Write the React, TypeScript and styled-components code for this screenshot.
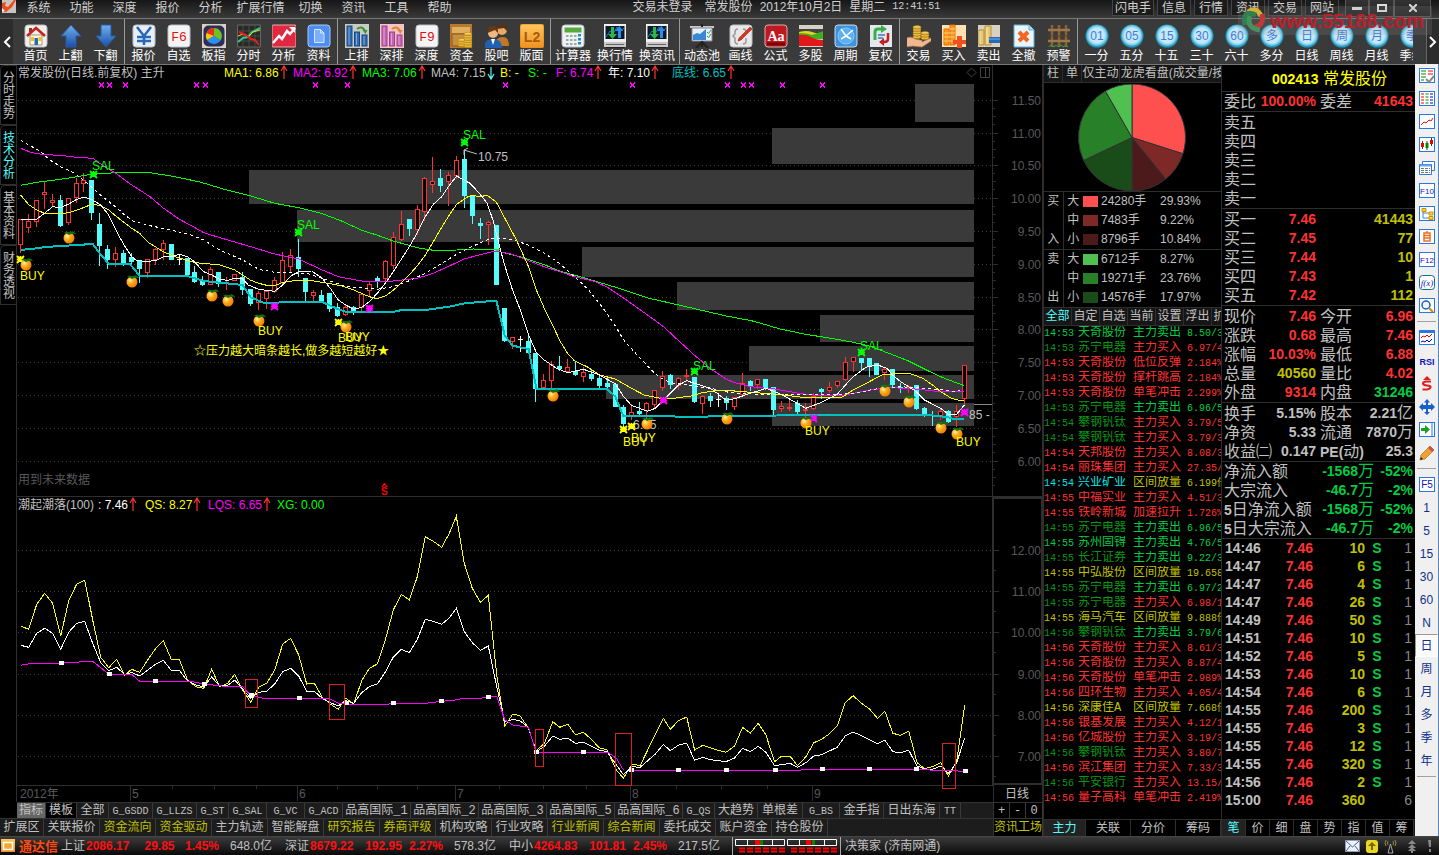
import React from "react";
import styled, { createGlobalStyle, css } from "styled-components";

const SANS = '"Liberation Sans", "Noto Sans CJK SC", sans-serif';
const MONO = '"Liberation Mono", "Noto Sans CJK SC", monospace';

const C = {
  line: "#2e2e2e",
  text: "#c0c0c0",
  dim: "#585858",
  red: "#ff3232",
  green: "#00cc44",
  darkGreen: "#0a9614",
  olive: "#c0c000",
  yellow: "#ffff00",
  cyan: "#00e6e6",
  candle: "#54fcfc",
  magenta: "#ff00ff",
  lime: "#00ff00",
  teal: "#00c0c0",
};

const GlobalStyle = createGlobalStyle`
  * { box-sizing: border-box; }
  body { margin: 0; background: #000; color: ${C.text}; font: 12px/16px ${SANS}; }
  button { font: inherit; color: inherit; background: none; border: 0; padding: 0; margin: 0; white-space: nowrap; cursor: pointer; }
  table { border-collapse: separate; border-spacing: 0; table-layout: fixed; width: 100%; }
  td, th { padding: 0; font-weight: inherit; text-align: left; white-space: nowrap; overflow: hidden; }
  svg { display: block; flex: none; }
`;

const Page = styled.div`
  position: relative;
  display: flex;
  flex-direction: column;
  min-height: 100vh;
  overflow: hidden;
`;

/* ---------- title bar ---------- */

const TitleBar = styled.header`
  display: flex;
  height: 18px;
  background: linear-gradient(#161616, #3a3a3a);
  color: #d0d0d0;
  padding-right: 8px;
`;
const Menu = styled.nav`
  display: flex;
`;
const MenuItem = styled.button<{ $wide?: boolean }>`
  width: ${(p) => (p.$wide ? 57 : 43)}px;
  line-height: 14px;
  height: 16px;
`;
const Session = styled.div`
  flex: 1;
  display: flex;
  justify-content: center;
  gap: 7px;
  line-height: 14px;
  white-space: nowrap;
  span:first-child { margin-right: 5px; }
  time:last-child { font-family: ${MONO}; font-size: 10px; }
`;
const Shortcuts = styled.div`
  display: flex;
  gap: 3px;
  margin-right: 6px;
`;
const Shortcut = styled.button`
  min-width: 34px;
  padding: 0 2px;
  height: 16px;
  line-height: 14px;
  background: #1c1c1c;
  border: 1px solid #444;
  border-top: 0;
`;
const WindowButton = styled.button<{ $w: number }>`
  width: ${(p) => p.$w}px;
  height: 17px;
  display: flex;
  align-items: center;
  justify-content: center;
  border: 1px solid #555;
  border-top: 0;
  background: linear-gradient(#333, #222);
`;
const Watermark = styled.div`
  position: absolute;
  top: 6px;
  right: 7px;
  display: flex;
  align-items: center;
  height: 29px;
  padding-right: 8px;
  background: rgba(150, 150, 150, 0.18);
  color: #b8202c;
  font-size: 20px;
  font-weight: bold;
  pointer-events: none;
`;

/* ---------- toolbar ---------- */

const ToolBar = styled.div`
  display: flex;
  height: 47px;
  background: #3a3a3a;
  border-top: 1px solid #777;
  border-bottom: 1px solid #777;
  color: #fff;
`;
const Scroller = styled.button<{ $right?: boolean }>`
  width: 13px;
  background: #2c2c2c;
  display: flex;
  align-items: center;
  justify-content: center;
  ${(p) => p.$right && css`border-left: 1px solid #666;`}
`;
const Tools = styled.div`
  flex: 1;
  display: flex;
  overflow: hidden;
  margin: 0 13px 0 5px;
`;
const ToolGroup = styled.div`
  display: flex;
  flex: none;
  & + & { border-left: 1px solid #999; padding-left: 1px; margin-left: 1px; }
`;
const Tool = styled.button<{ $w: number }>`
  width: ${(p) => p.$w}px;
  display: flex;
  flex-direction: column;
  align-items: center;
  justify-content: flex-end;
  line-height: 16px;
`;

/* ---------- workspace ---------- */

const Workspace = styled.main`
  flex: 1;
  display: flex;
`;
const ChartArea = styled.section`
  flex: 1;
  min-width: 0;
  display: flex;
  flex-direction: column;
`;
const ChartRow = styled.div`
  display: flex;
`;
const SideTabs = styled.nav`
  width: 17px;
  flex: none;
  border-right: 1px solid ${C.line};
`;
const SideTab = styled.button<{ $on?: boolean }>`
  display: block;
  width: 16px;
  height: 60px;
  padding: 6px 2px;
  line-height: 12px;
  white-space: normal;
  word-break: break-all;
  color: ${(p) => (p.$on ? C.candle : C.text)};
  border: 1px solid ${C.line};
  border-right: 0;
  border-top-left-radius: 5px;
`;
const Panes = styled.div`
  flex: 1;
  min-width: 0;
`;
const PaneHeader = styled.div<{ $boxed?: boolean }>`
  display: flex;
  height: ${(p) => (p.$boxed ? 17 : 16)}px;
  border-top: ${(p) => (p.$boxed ? `1px solid ${C.line}` : "0")};
  padding-left: 1px;
`;
const Legend = styled.div`
  flex: 1;
  display: flex;
  white-space: nowrap;
`;
const PaneTitle = styled.span<{ $w: number }>`
  width: ${(p) => p.$w}px;
`;
const LegendItem = styled.span<{ $w: number; $c: string }>`
  width: ${(p) => p.$w}px;
  color: ${(p) => p.$c};
  display: flex;
  gap: 1px;
`;
const AxisCap = styled.div<{ $boxed?: boolean }>`
  width: 51px;
  border-left: ${(p) => (p.$boxed ? 2 : 1)}px solid ${C.line};
  border-top: ${(p) => (p.$boxed ? 2 : 0)}px solid ${C.line};
  border-right: ${(p) => (p.$boxed ? 2 : 1)}px solid ${C.line};
`;
const Plot = styled.svg`
  width: 100%;
  height: auto;
  overflow: visible;
  font-family: ${SANS};
  font-size: 12px;
`;
const TabStrip = styled.div<{ $h: number; $indent?: boolean }>`
  display: flex;
  height: ${(p) => p.$h}px;
  line-height: ${(p) => p.$h - 3}px;
  background: #1c1c1c;
  border-top: 1px solid #333;
  margin-left: ${(p) => (p.$indent ? 17 : 0)}px;
  font-family: ${MONO};
`;
const Tab = styled.button<{ $w: number; $c?: string; $bg?: string }>`
  width: ${(p) => p.$w}px;
  flex: none;
  overflow: hidden;
  padding-top: 2px;
  border-right: 1px solid #3a3a3a;
  color: ${(p) => p.$c || C.text};
  background: ${(p) => p.$bg || "none"};
  &[data-latin="true"] { font-size: 10px; }
`;
const StripEnd = styled.div`
  margin-left: auto;
  width: 50px;
  display: flex;
  background: #000;
  border-left: 1px solid #333;
`;

/* ---------- right panels ---------- */

const MainForce = styled.section`
  width: 178px;
  flex: none;
  display: flex;
  flex-direction: column;
  border-left: 1px solid ${C.line};
`;
const Quote = styled.section`
  width: 194px;
  flex: none;
  display: flex;
  flex-direction: column;
  border-left: 1px solid ${C.line};
  font-size: 16px;
  line-height: 19px;
`;
const PanelTabs = styled.div<{ $last?: boolean }>`
  display: flex;
  height: ${(p) => (p.$last ? 17 : 18)}px;
  line-height: ${(p) => (p.$last ? 16 : 17)}px;
  overflow: hidden;
  background: #161616;
  border-bottom: ${(p) => (p.$last ? 0 : 1)}px solid ${C.line};
  border-top: ${(p) => (p.$last ? 1 : 0)}px solid ${C.line};
  margin-top: ${(p) => (p.$last ? "auto" : 0)};
  font-size: 12px;
`;
const PanelTab = styled.button<{ $w: number; $on?: boolean; $bg?: string }>`
  width: ${(p) => p.$w}px;
  flex: none;
  border-right: 1px solid ${C.line};
  background: ${(p) => p.$bg || "none"};
  color: ${(p) => (p.$on ? C.candle : C.text)};
`;
const PieBox = styled.div`
  height: 109px;
  padding-top: 1px;
  border-bottom: 1px solid ${C.line};
`;
const Breakdown = styled.table`
  border-collapse: collapse;
  tr { height: 19px; line-height: 19px; }
  td:first-child { border-right: 1px solid ${C.line}; text-align: center; }
  td:nth-child(2) { text-align: center; }
  tbody { border-bottom: 1px solid ${C.line}; }
`;
const Swatch = styled.i<{ $c: string }>`
  display: block;
  width: 15px;
  height: 11px;
  background: ${(p) => p.$c};
`;
const Feed = styled.table`
  font-family: ${MONO};
  tr { height: 15px; line-height: 15px; }
  td:first-child, td:last-child { font-size: 10px; }
`;
const Cell = styled.td<{ $c: string }>`
  color: ${(p) => p.$c};
`;
const StockName = styled.h1`
  margin: 0;
  height: 27px;
  font-size: 16px;
  font-weight: normal;
  line-height: 27px;
  text-align: center;
  padding-left: 22px;
  color: ${C.yellow};
  border-bottom: 1px solid ${C.line};
  b { font-size: 14px; }
`;
const Block = styled.table<{ $pad?: boolean }>`
  border-bottom: 1px solid ${C.line};
  padding-top: ${(p) => (p.$pad ? 1 : 0)}px;
  tr { height: 19px; line-height: 19px; }
  th { padding-left: 2px; }
  td { text-align: right; font-size: 14px; font-weight: bold; padding-right: 2px; }
  span { font-size: 16px; font-weight: normal; line-height: 1px; }
  small { font-size: 14px; font-weight: bold; line-height: 1px; }
`;
const Ticks = styled.table`
  font-size: 14px;
  font-weight: bold;
  tr { height: 18px; line-height: 18px; }
  td { text-align: right; }
  td:first-child { text-align: left; padding-left: 3px; }
  td:nth-child(4) { text-align: center; }
  td:last-child { padding-right: 3px; font-weight: normal; }
`;
const IconStrip = styled.aside`
  width: 24px;
  flex: none;
  background: #f0f0f0;
  border-right: 1px solid #5c84b0;
  color: #10308c;
  margin-top: -1px;
`;
const StripButton = styled.button<{ $on?: boolean }>`
  width: 23px;
  height: 23px;
  display: flex;
  align-items: center;
  justify-content: center;
  ${(p) => p.$on && css`background: #fafafa; border: 1px solid #999; border-right-color: #fff; border-bottom-color: #fff;`}
`;
const StripRule = styled.hr`
  margin: 4px 2px;
  border: 0;
  height: 1px;
  background: #a0a0a0;
`;

/* ---------- status bar ---------- */

const StatusBar = styled.footer`
  display: flex;
  align-items: center;
  height: 19px;
  line-height: 19px;
  background: linear-gradient(#3a3a3a, #0a0a0a);
  border-top: 1px solid #444;
  white-space: nowrap;
`;
const Brand = styled.b`
  width: 42px;
  margin-left: 4px;
  color: #ff4a10;
  font-size: 13px;
`;
const Index = styled.div<{ $w: number }>`
  display: grid;
  grid-template-columns: 25px 50px 47px 38px 1fr;
  width: ${(p) => p.$w}px;
  b { color: #ff1010; text-align: center; }
  b:nth-child(2) { text-align: left; }
  span:last-child { padding-left: 9px; }
`;
const Meter = styled.div`
  border: solid #aaa;
  border-width: 0 1px;
  padding: 0 2px;
  height: 18px;
  display: flex;
  align-items: center;
  margin-right: 4px;
`;
const Tray = styled.div`
  margin-left: auto;
  display: flex;
  align-items: center;
  gap: 6px;
  padding-right: 6px;
`;

/* ---------- icon drawings ---------- */

const Tile = ({ fill = "#e9eef4", stroke = "#b8c0c8" }: { fill?: string; stroke?: string }) => (
  <rect x="1" y="1" width="22" height="22" rx="3" fill={fill} stroke={stroke} />
);

const Definitions = styled.svg`
  position: absolute;
  width: 0;
  height: 0;
`;
const Gradients = () => (
  <Definitions aria-hidden="true">
    <defs>
      <linearGradient id="blueV" x2="0" y2="1"><stop stopColor="#6fb0ee" /><stop offset="1" stopColor="#1a4fa8" /></linearGradient>
      <linearGradient id="orangeV" x2="0" y2="1"><stop stopColor="#ffc860" /><stop offset="1" stopColor="#f09020" /></linearGradient>
      <linearGradient id="goldV" x2="0" y2="1"><stop stopColor="#ffe890" /><stop offset="1" stopColor="#d89a10" /></linearGradient>
      <radialGradient id="discG"><stop offset=".7" stopColor="#c4eafa" /><stop offset="1" stopColor="#58b8dc" /></radialGradient>
      <radialGradient id="fruit" cx=".35" cy=".35" r=".7"><stop stopColor="#fff6a0" /><stop offset=".4" stopColor="#ffb020" /><stop offset="1" stopColor="#f07800" /></radialGradient>
    </defs>
  </Definitions>
);

const Coins = ({ x, y, n }: { x: number; y: number; n: number }) => (
  <g stroke="#a87808" strokeWidth=".6" fill="url(#goldV)">
    {Array.from({ length: n }, (_, i) => <ellipse key={i} cx={x} cy={y - i * 2.4} rx="4" ry="1.8" />)}
  </g>
);

const Bars = ({ bg, a, b, arc }: { bg: string; a: string; b: string; arc: string }) => (
  <>
    <rect x="0" y="0" width="24" height="24" fill={bg} />
    <g fill={a} stroke={b}><rect x="2" y="2" width="5" height="20" /><rect x="9.500" y="8" width="5" height="14" /><rect x="17" y="11" width="5" height="11" /></g>
    <path d="M4 3v18M11.500 9v12M19 12v9" stroke="#fff" opacity=".4" />
    <path d="M12 5q5-4 8 2" fill="none" stroke={arc} strokeWidth="2" /><path d="M17.500 6h5l-2 4z" fill={arc} />
  </>
);

const Monitor = () => (
  <>
    <rect x="1" y="0" width="22" height="18" fill="#f0f0f0" /><rect x="2.500" y="2" width="19" height="13" fill="#0a1a28" />
    <path d="M3 13l4-6 3 3 4-7 3 5 4-4" fill="none" stroke="#1878d0" />
    <path d="M8 3h3v7h3l-4.500 5L5 10h3z" fill="#28b848" /><path d="M15 14h3V7h2l-3.500-5L12 7h3z" fill="#2890e8" />
    <rect x="1" y="18" width="22" height="5" fill="#c8c8c8" /><path d="M3 20.500h18" stroke="#666" /><path d="M3 23.500h18" stroke="#222" />
  </>
);

const ICONS: Record<string, React.ReactNode> = {
  home: (<><Tile fill="#f2efe8" /><path d="M6 11h12v10H6z" fill="#fff8d8" stroke="#998" /><path d="M10.500 14h3.500v7h-3.500z" fill="#2868b8" /><path d="M7 13h3v4H7zM14.500 13h3v4h-3z" fill="#f0c020" /><path d="M3 12l9-8 9 8" fill="none" stroke="#c82020" strokeWidth="2.500" /><path d="M5 4h3v4H5z" fill="#a03020" /></>),
  up: <path d="M12 1l10 11h-5v11H7V12H2z" fill="url(#blueV)" stroke="#2858a8" />,
  down: <path d="M12 23L2 12h5V1h10v11h5z" fill="url(#blueV)" stroke="#2858a8" />,
  yen: (<><Tile /><path d="M5 3l7 9 7-9M5 13h14M5 17h14M12 12v9" fill="none" stroke="#2868b8" strokeWidth="2.500" /></>),
  f6: (<><Tile fill="#f4f4f4" /><text x="12" y="17" textAnchor="middle" fontFamily="Liberation Mono" fontSize="13" fill="#e01010">F6</text></>),
  f9: (<><Tile fill="#f4f4f4" /><text x="12" y="17" textAnchor="middle" fontFamily="Liberation Mono" fontSize="13" fill="#e01010">F9</text></>),
  sector: (<><path d="M0 0h24v24H0z" fill="#d8d0c4" /><rect x="1.500" y="1.500" width="21" height="21" rx="5" fill="#2c3058" /><path d="M12 12V4a8 8 0 0 1 6.500 12.500z" fill="#70c020" /><path d="M12 12l6.500 4.500A8 8 0 0 1 5 16z" fill="#2890f0" /><path d="M12 12L5 16A8 8 0 0 1 12 4z" fill="#f8c810" /><path d="M12 12L4.500 9A8 8 0 0 1 12 4z" fill="#e83018" /></>),
  intraday: (<><path d="M.500 1h23v22H.500z" fill="#2a2a24" stroke="#666" /><path d="M6 1v22M12 1v22M18 1v22M1 7h22M1 12h22M1 17h22" stroke="#555" strokeWidth=".7" /><path d="M1 18l5-4 5-1 4-5 8-4" fill="none" stroke="#28c898" strokeWidth="2" /><path d="M1 12l5-2 5 3 5-5 7-2" fill="none" stroke="#e8d820" /><path d="M2 8l7 3 5 4 4 1 4 5" fill="none" stroke="#e82020" strokeWidth="2" /></>),
  analyse: (<><rect x="0" y="1" width="24" height="22" rx="1" fill="#e02840" stroke="#eaa" /><path d="M1 19l6-7 3 3 5-8 3 3 5-6" fill="none" stroke="#fff" strokeWidth="2.500" /><path d="M17 3h6v6z" fill="#fff" /></>),
  info: (<><Tile fill="#4f8df0" stroke="#a8c8f8" /><path d="M7.500 5.500h6l3.500 3.500v9.500H7.500z" fill="#7ab0ff" stroke="#d8e8ff" /><path d="M13.500 5.500V9H17" fill="none" stroke="#d8e8ff" /></>),
  barsBlue: <Bars bg="#c8ccc8" a="#2f6cb4" b="#184880" arc="#40902c" />,
  barsPink: <Bars bg="#f4c4c8" a="#c864b8" b="#984088" arc="#e08820" />,
  money: (<><path d="M0 0h22v24H0z" fill="#b87830" /><path d="M2 3h18v6H2z" fill="#e0b060" /><path d="M2 10h18v12H2z" fill="#c89040" stroke="#8a5820" /><Coins x={12} y={21} n={3} /><Coins x={18} y={22} n={6} /></>),
  people: (<><circle cx="17" cy="6" r="5" fill="#e8a868" /><path d="M12 5q1-6 7-4 4 1 3 6l-3-3z" fill="#5a3010" /><path d="M10 22q0-9 8-9 6 0 6 9z" fill="#c07828" /><circle cx="8" cy="9" r="5" fill="#f0b880" /><path d="M2.500 9Q2 2 8.500 2 14 3 13 9l-3-3z" fill="#6a3812" /><path d="M-1 24q0-9 9-9t9 9z" fill="#2060b0" /><path d="M6 15h4l-2 6z" fill="#fff" /></>),
  l2: (<><rect x="0" y="0" width="24" height="24" rx="3" fill="url(#orangeV)" stroke="#e08818" /><text x="12" y="18" textAnchor="middle" fontFamily="Liberation Sans" fontWeight="bold" fontSize="14" fill="#a85c10">L2</text></>),
  calc: (<><Tile fill="#eef2f0" /><rect x="3.500" y="3.500" width="17" height="5" fill="#58a840" /><g fill="#9aa8b0">{[11, 15, 19].map((y) => [5, 9, 13].map((x) => <rect key={`${x}${y}`} x={x} y={y} width="2.500" height="2" />))}</g><path d="M18.500 10v11" stroke="#2888c8" strokeWidth="3" strokeDasharray="2.500 1.500" /></>),
  monitor: <Monitor />,
  board: (<><rect x="0" y="2" width="24" height="2" fill="#c8c8c8" /><path d="M2 4h20v13H2z" fill="#e8f0f4" stroke="#889" /><path d="M3 16v-5l4-2 3 1 6-5v11z" fill="#3888d8" /><path d="M17 8l1.500 1.500L21 6M17 12l1.500 1.500L21 10" fill="none" stroke="#30a040" /><path d="M12 0v3M12 17v6M12 18l-6 6M12 18l6 6" stroke="#222" strokeWidth="2" /></>),
  draw: (<><Tile fill="#e8e8e8" /><path d="M9 5q-3 0-3 3v2l-2 2 2 2v3q0 3 3 3M14 5q3 0 3 3M17 14v3q0 3-3 3" fill="none" stroke="#999" strokeWidth="1.500" /><path d="M21 3l2 2-11 11-3 1 1-3z" fill="#e03020" stroke="#801810" strokeWidth=".5" /></>),
  formula: (<><Tile fill="#c01820" stroke="#d8b0b0" /><path d="M3 20h18" stroke="#700" strokeWidth="3" /><text x="12" y="17" textAnchor="middle" fontFamily="Liberation Serif" fontWeight="bold" fontSize="14" fill="#fff">Aa</text></>),
  multi: (<><path d="M0 1h25v22H0z" fill="#d8d0c8" /><path d="M0 5h25v6H0z" fill="#444" /><path d="M0 8q8-2 13 0t12 2v3H0z" fill="#e0d820" /><path d="M0 9q8 0 13 2l12-4v8H0z" fill="#40b020" /><path d="M0 11q7-1 12 2t13 3v6H0z" fill="#e01818" /></>),
  period: (<><Tile fill="#3c94e0" stroke="#c8d8e8" /><circle cx="12" cy="12" r="8" fill="#5cb0f0" stroke="#88c8f8" /><path d="M7 5l5 7 7-6M12 12l5 3M12 12l-5 3" fill="none" stroke="#fff" strokeWidth="1.500" /></>),
  rights: (<><path d="M1 1h22v22H1z" fill="#e4e8ec" /><path d="M6 16V8q0-3 3-3h4" fill="none" stroke="#38b048" strokeWidth="3" /><path d="M12 1l6 4-6 4z" fill="#38b048" /><path d="M9 11h7M9 14h5" stroke="#3878c0" strokeWidth="1.500" /><path d="M19 9v6q0 3-4 3" fill="none" stroke="#c02020" strokeWidth="2.500" /><path d="M15 14l-5 4 5 4z" fill="#c02020" /></>),
  trade: (<><Coins x={10} y={13} n={5} /><Coins x={18} y={14} n={3} /><path d="M-1 14q6-2 9 1l5 1q3 0 2 2l9-4q2 1 0 3l-9 6-9-1-7 1z" fill="#f0b890" stroke="#c08050" strokeWidth=".7" /></>),
  buy: (<><path d="M0 1h24v22H0z" fill="#ffe0b0" /><path d="M2 5h5v16H2zM8 1h5v20H8z" fill="#ff9820" stroke="#e07000" /><path d="M2 9h11M2 13h11M2 17h11M8 5h5" stroke="#ffd070" /><path d="M15 12h5v4h4v4h-4v4h-5v-4h-4v-4h4z" fill="#f05020" /></>),
  sell: (<><path d="M1 1h22v22H1z" fill="#d8d0c0" /><path d="M2 6h5v15H2zM8 2h6v19H8z" fill="#e8c870" stroke="#b89030" /><path d="M3 7v13M10 3v17" stroke="#fff" opacity=".6" /><rect x="12" y="13" width="11" height="6" fill="#2868b8" /><path d="M12 15h11" stroke="#78b0e8" /></>),
  cancel: (<><path d="M2 1h15l5 5v17H2z" fill="#e8f6fc" stroke="#60b0d8" /><path d="M17 1v5h5" fill="#b0dcf0" stroke="#60b0d8" /><path d="M7 8l9 9M16 8l-9 9" stroke="#f06820" strokeWidth="4" /></>),
  fence: (<><path d="M5 1v22M12 1v22M19 1v22" stroke="#8a6038" strokeWidth="2.500" /><path d="M1 6h22M1 17h22" stroke="#a07848" strokeWidth="2.500" /><path d="M1 12h22" stroke="#604020" /><path d="M2 23q2-4 4 0 3-3 6 0 2-4 4 0 3-3 5 0" fill="none" stroke="#48a038" /></>),
};

const Disc = ({ label }: { label: string }) => (
  <>
    <circle cx="12" cy="12" r="11.500" fill="#1c9cc4" />
    <circle cx="12" cy="11.500" r="10.500" fill="url(#discG)" />
    <text x="12" y="16" textAnchor="middle" fontFamily={SANS} fontSize="12" fill="#4878d8">{label}</text>
  </>
);

type ToolDef = [label: string, icon: string, width?: number];
const TOOL_GROUPS: ToolDef[][] = [
  [["首页", "home"], ["上翻", "up"], ["下翻", "down"]],
  [["报价", "yen"], ["自选", "f6"], ["板指", "sector"], ["分时", "intraday"], ["分析", "analyse"], ["资料", "info"]],
  [["上排", "barsBlue"], ["深排", "barsPink"], ["深度", "f9"], ["资金", "money"], ["股吧", "people"], ["版面", "l2"]],
  [["计算器", "calc", 42], ["换行情", "monitor", 42], ["换资讯", "monitor", 42]],
  [["动态池", "board", 42], ["画线", "draw"], ["公式", "formula"], ["多股", "multi"], ["周期", "period"], ["复权", "rights"]],
  [["交易", "trade"], ["买入", "buy"], ["卖出", "sell"], ["全撤", "cancel"], ["预警", "fence"]],
  [["一分", "01"], ["五分", "05"], ["十五", "15"], ["三十", "30"], ["六十", "60"], ["多分", "多"], ["日线", "日"], ["周线", "周"], ["月线", "月"], ["季线", "季"]],
];

/* ---------- chart data ---------- */

// Candle: kind (r rise, c fall, w flat), then high, body top, body bottom, low in thirds of a pixel.
const CANDLES = `r 478 478 556 578|r 462 484 503 518|r 420 420 486 502|r 365 397 406 446|r 402 420 428 440|c 405 420 497 500|r 415 415 488 495|r 355 370 415 428|r 340 360 371 395|c 360 360 459 480|c 459 492 558 618|c 555 568 600 627|r 562 580 600 620|c 570 580 615 618|c 580 590 605 622|c 600 603 627 668|r 597 597 638 654|r 564 568 600 615|r 540 550 570 600|c 552 552 600 600|w 585 597 600 615|c 594 594 645 648|c 618 636 666 668|c 648 663 675 678|r 622 628 674 676|c 636 636 672 680|r 650 666 668 690|r 643 643 662 664|c 636 651 690 704|c 686 688 732 738|r 694 700 728 750|r 690 694 717 747|r 652 661 695 700|r 576 600 668 672|r 567 586 620 638|c 537 591 627 650|c 654 654 696 724|r 690 695 708 730|c 691 705 728 730|c 700 700 746 756|c 730 742 768 772|r 735 742 766 768|c 738 741 755 765|r 700 702 745 752|r 665 673 692 708|c 648 655 663 684|r 600 604 657 664|r 516 532 617 628|r 453 493 539 543|c 478 478 507 528|r 436 448 510 525|r 350 354 455 483|r 291 364 374 400|c 327 354 378 395|r 337 346 366 438|r 289 300 347 357|c 270 297 408 445|c 406 406 468 492|c 475 488 497 538|r 483 485 494 556|c 495 495 675 675|c 744 744 842 846|r 830 832 846 866|w 828 838 840 876|c 824 843 879 880|c 880 880 986 1026|r 942 959 984 990|r 902 912 964 984|c 888 918 928 934|r 898 920 936 940|c 902 933 945 948|r 920 937 952 965|c 926 941 957 964|c 946 953 978 990|c 955 969 980 984|c 972 972 1041 1041|c 1036 1041 1092 1106|r 1032 1056 1067 1080|c 1026 1053 1061 1072|r 1026 1028 1053 1078|r 990 990 1036 1044|r 934 947 983 992|c 942 945 975 988|r 950 953 978 990|r 927 946 948 965|c 951 951 1026 1030|r 1005 1009 1033 1062|c 998 1008 1022 1041|w 1000 1018 1020 1040|c 1008 1014 1028 1050|r 1010 1012 1040 1050|r 938 970 1005 1008|c 960 963 977 992|r 958 958 976 988|c 957 957 987 990|c 980 981 1050 1064|r 1022 1038 1046 1056|r 1018 1040 1047 1052|c 1020 1030 1056 1068|r 1028 1048 1054 1070|r 1000 1008 1046 1050|c 985 988 996 1016|r 966 981 993 1000|r 962 964 977 983|r 892 907 960 962|r 892 892 907 936|c 893 894 909 930|c 894 894 921 950|c 908 909 946 946|r 924 928 938 960|c 928 928 976 980|c 970 982 986 998|r 974 978 981 1000|c 976 976 1048 1050|c 1040 1045 1067 1072|c 1054 1064 1068 1098|r 1048 1052 1072 1080|c 1050 1052 1086 1090|r 1036 1052 1070 1100|r 916 916 1016 1036`
  .split("|")
  .map((row) => {
    const [kind, ...v] = row.split(" ");
    return { kind, y: v.map((n) => Math.round(60 + Number(n) / 3)) };
  });

type Scale = { ox: number; kx: number; oy: number };
const EARLY: Scale = { ox: 0, kx: 3, oy: 60 };
const LATE: Scale = { ox: 480, kx: 2.8, oy: 60 };
const EARLY_LOW: Scale = { ox: 0, kx: 3, oy: 480 };
const LATE_LOW: Scale = { ox: 500, kx: 2.877, oy: 480 };

const toPoints = (s: string, k: Scale) =>
  s.split(" ").map((p) => {
    const [x, y] = p.split(",").map(Number);
    return [k.ox + x / k.kx, k.oy + y / 3] as [number, number];
  });
const join = (a: string, b: string, ka: Scale, kb: Scale) =>
  [...toPoints(a, ka), ...toPoints(b, kb)].map(([x, y]) => `${x.toFixed(1)},${y.toFixed(1)}`).join(" ");

const UPPER = [
  { c: C.lime, w: 1, a: "62,376 110,367 182,358 230,350 278,342 350,338 450,338 514,348 600,366 680,390 752,408 824,430 896,443 967,461 1030,485 1085,511 1130,525 1180,543 1252,563 1300,571 1370,570 1420,567 1500,569", b: "46,573 102,587 180,614 225,634 290,653 380,682 470,714 560,736 690,768 760,782 800,794 840,807 912,823 990,836 1045,847 1090,858 1155,884 1200,903 1250,930 1300,955 1356,977" },
  { c: C.magenta, w: 1, a: "62,265 95,278 134,284 182,286 230,292 278,295 302,312 350,342 395,375 450,410 490,444 538,478 580,500 611,518 683,540 752,560 824,582 896,597 930,613 967,630 1015,650 1085,663 1180,663 1252,655 1300,640 1348,618 1395,596 1441,584 1482,574", b: "46,573 91,583 136,602 180,620 220,634 265,650 320,664 357,682 410,720 469,765 514,800 556,842 600,885 645,926 690,958 713,968 757,980 825,987 900,1001 957,1008 1010,1007 1045,1000 1090,991 1140,983 1200,985 1245,990 1300,996 1356,994" },
  { c: "#fff", w: 1, dash: "3 3", a: "62,240 86,255 120,273 150,300 182,320 225,340 254,364 278,384 302,406 350,443 374,465 400,483 450,497 514,510 570,524 611,540 659,570 728,600 776,628 830,638 920,640 967,655 1040,680 1132,688 1180,680 1228,662 1276,640 1325,610 1375,580 1441,548 1475,535", b: "46,534 75,536 102,542 136,556 180,580 214,603 265,650 300,685 345,745 379,798 401,838 440,885 480,930 500,950 533,968 580,975 645,985 702,998 757,1002 845,1003 957,1004 1010,1003 1060,998 1100,988 1178,980 1260,986 1330,994 1345,990" },
  { c: C.yellow, w: 1, a: "62,405 86,434 110,450 134,460 182,461 206,458 254,442 278,431 302,438 326,450 350,470 395,505 419,520 443,546 490,575 530,592 587,608 630,612 659,615 704,630 728,645 752,661 776,670 800,676 824,677 848,667 896,660 943,663 991,671 1030,679 1061,690 1108,710 1132,716 1156,708 1180,691 1204,668 1228,645 1252,617 1276,585 1300,545 1325,502 1348,465 1370,433 1400,412 1417,406 1440,410", b: "20,406 46,427 60,455 102,540 136,620 158,690 180,745 203,795 225,845 245,880 265,903 300,920 335,945 379,957 424,985 460,1005 500,1014 533,1016 590,1008 623,998 668,991 702,992 757,997 845,1004 912,1013 1010,1014 1045,990 1090,965 1125,945 1178,939 1205,941 1240,955 1267,975 1290,995 1320,1015 1345,1022 1356,1020" },
  { c: "#fff", w: 1, a: "62,478 110,478 158,440 182,443 206,432 230,418 254,411 278,420 302,435 326,465 350,515 374,558 395,590 410,602 443,604 466,602 490,591 514,590 538,583 562,590 580,602 611,635 635,645 659,658 683,661 704,655 728,657 745,675 776,688 824,694 848,675 872,648 896,635 935,633 967,655 991,685 1015,720 1037,735 1061,748 1085,742 1108,725 1132,700 1156,670 1180,635 1228,560 1252,518 1276,470 1300,433 1325,410 1348,376 1370,348 1410,370 1440,402", b: "20,430 36,480 55,560 69,615 91,690 113,750 136,825 158,878 180,900 214,925 245,938 290,928 335,945 379,972 401,1008 424,1036 469,1054 491,1045 514,1020 556,975 579,962 600,970 645,985 690,1021 713,1016 757,1000 802,985 845,1004 880,1025 912,1045 957,1027 1001,1002 1023,975 1045,950 1080,922 1113,915 1140,925 1155,945 1178,965 1200,980 1222,995 1245,1020 1290,1045 1312,1063 1335,1062 1356,1035" },
  { c: C.teal, w: 2, a: "62,570 110,565 134,561 182,558 278,552 302,584 326,611 390,612 419,648 562,648 611,663 728,675 752,712 790,728 967,726 1015,748 1040,756 1180,756 1205,750 1275,750 1348,740 1395,730 1485,722", b: "46,723 69,825 91,857 136,867 158,986 355,986 379,1010 401,1068 600,1070 800,1067 912,1065 1250,1064 1312,1072 1325,1077 1356,1077" },
];

const LOWER = [
  { c: C.yellow, a: "62,438 86,448 110,373 134,340 158,370 182,468 206,363 230,312 254,300 278,420 302,532 326,563 350,538 374,585 395,568 419,577 443,540 466,507 490,482 514,538 538,538 562,598 587,620 611,625 635,568 659,620 683,610 704,583 728,630 752,667 776,622 800,610 824,570 848,492 872,475 896,525 920,612 943,610 967,652 991,672 1015,688 1037,655 1061,672 1085,602 1108,565 1132,552 1156,480 1180,390 1204,343 1228,360 1252,290 1276,170 1300,184 1325,202 1348,160 1369,109 1393,250 1417,325 1441,367 1465,346 1490,585", b: "14,738 37,702 58,708 82,745 104,812 128,790 152,725 172,742 195,733 217,764 240,757 263,778 285,803 308,810 335,870 355,895 380,852 403,857 425,810 470,715 490,748 513,722 537,711 560,810 583,796 628,811 650,817 675,798 698,742 720,759 743,730 765,765 790,845 810,829 835,829 856,857 880,830 903,788 925,778 947,762 970,738 993,668 1016,647 1040,670 1063,687 1086,715 1107,693 1130,760 1152,766 1176,754 1200,848 1222,866 1245,860 1268,848 1290,888 1314,845 1337,675" },
  { c: "#fff", a: "62,496 86,502 110,460 134,445 158,460 182,508 206,457 230,430 254,424 278,490 302,548 326,572 350,562 374,584 395,577 419,588 443,570 466,553 490,541 514,571 538,571 562,602 587,615 611,620 635,591 659,618 683,616 704,600 728,628 752,655 776,637 800,634 824,612 848,575 872,565 896,588 920,634 943,634 967,655 991,668 1015,678 1037,662 1061,670 1085,638 1108,620 1132,612 1156,576 1180,531 1204,508 1228,518 1252,478 1276,418 1300,424 1325,433 1348,414 1369,385 1393,455 1417,488 1441,511 1465,498 1490,620", b: "14,726 37,718 60,724 82,745 104,816 128,798 152,768 172,778 195,775 217,790 240,787 285,810 308,815 335,855 355,884 380,860 403,862 425,842 447,822 470,793 490,812 513,796 537,789 560,841 583,832 606,839 650,845 675,834 698,805 720,815 743,799 765,817 790,857 835,850 856,862 880,848 903,828 925,824 970,802 993,768 1016,756 1040,767 1086,791 1107,780 1130,815 1152,818 1176,811 1200,858 1222,867 1245,868 1268,858 1290,880 1314,848 1337,774" },
  { c: C.magenta, a: "62,556 98,550 182,549 278,544 326,582 395,583 419,604 570,604 611,612 683,620 728,620 752,646 790,655 985,655 1015,670 1060,673 1165,673 1180,669 1285,669 1325,664 1360,661 1390,655 1440,655 1490,648", b: "14,720 37,735 82,742 104,818 312,818 335,835 355,870 865,871 870,868 1234,868 1240,871 1300,871 1337,875" },
];

const PRESSURE = [[915, 84, 38], [772, 128, 36], [249, 170, 34], [297, 210, 32], [582, 247, 30], [677, 282, 28], [820, 315, 27], [749, 346, 25], [606, 375, 24], [772, 403, 23]];
const PRICES: [number, string][] = [[100, "11.50"], [133, "11.00"], [165, "10.50"], [198, "10.00"], [231, "9.50"], [264, "9.00"], [297, "8.50"], [329, "8.00"], [362, "7.50"], [395, "7.00"], [428, "6.50"], [461, "6.00"]];
const LOW_PRICES: [number, string][] = [[550, "12.00"], [591, "11.00"], [632, "10.00"], [674, "9.00"], [715, "8.00"], [756, "7.00"]];
const FRUITS = [[26, 263], [69, 236], [132, 280], [212, 294], [228, 299], [259, 319], [346, 325], [553, 394], [647, 422], [727, 417], [806, 421], [885, 389], [909, 400], [941, 426], [957, 432]];
const STARS: [number, number, string][] = [[93, 174, C.lime], [298, 232, C.lime], [464, 142, C.lime], [694, 371, C.lime], [861, 352, C.lime], [20, 259, C.yellow], [338, 322, C.yellow], [623, 429, C.yellow], [631, 426, C.yellow], [274, 306, C.magenta], [369, 308, C.magenta], [663, 400, C.magenta], [813, 418, C.magenta], [964, 412, C.magenta]];
const TOP_MARKS = [101, 109, 125, 196, 205, 315, 347, 505, 632, 727, 743, 751, 782, 822];
const LABELS: [number, number, string, string][] = [
  [92, 170, "SAL", C.lime], [297, 229, "SAL", C.lime], [463, 139, "SAL", C.lime], [693, 370, "SAL", C.lime], [860, 350, "SAL", C.lime],
  [20, 280, "BUY", C.yellow], [258, 335, "BUY", C.yellow], [338, 342, "BUY", C.yellow], [345, 341, "BUY", C.yellow],
  [623, 446, "BUY", C.yellow], [631, 442, "BUY", C.yellow], [805, 435, "BUY", C.yellow], [956, 446, "BUY", C.yellow],
];
const SQUARES = [...toPoints("182,549 326,582 466,603 611,612 752,646 896,654 1038,668 1180,669 1324,663 1465,651", EARLY_LOW), ...toPoints("104,816 240,816 377,869 513,870 651,870 790,870 925,867 1063,867 1198,867 1337,873", LATE_LOW)];
const FRAMES = [[245, 679, 13, 29], [329, 684, 16, 36], [535, 729, 9, 38], [615, 733, 17, 53], [942, 743, 14, 46]];

const Arrow = ({ down }: { down?: boolean }) => (
  <svg width="8" height="16" viewBox="0 0 8 16" fill="none" stroke={down ? C.candle : C.red} strokeWidth="1.200">
    {down ? <path d="M4 2v12M1 9l3 5 3-5" /> : <path d="M4 14V1M1 6l3-5 3 5" />}
  </svg>
);

const PriceChart = () => (
  <Plot viewBox="17 81 1026 415" role="img" aria-label="日线K线图">
    <g stroke="#3c3c3c" strokeDasharray="1 3" shapeRendering="crispEdges">
      {PRICES.map(([y]) => <path key={y} d={`M18 ${y + 0.5}H992`} />)}
    </g>
    <g fill="#3a3a3a">
      {PRESSURE.map(([x, y, h]) => <rect key={y} x={x} y={y} width={974 - x} height={h} />)}
    </g>
    <g stroke={C.line} shapeRendering="crispEdges">
      <path d="M992.500 81V496M1042.500 81V496" />
      {PRICES.map(([y]) => <path key={y} d={`M993 ${y + 0.5}h5M993 ${y + 8.5}h2M993 ${y + 16.5}h3M993 ${y + 24.5}h2`} />)}
    </g>
    <g fill={C.dim} textAnchor="end">
      {PRICES.map(([y, t]) => <text key={t} x="1041" y={y + 5}>{t}</text>)}
    </g>
    <g stroke={C.magenta} shapeRendering="crispEdges">
      {TOP_MARKS.map((x) => <path key={x} d={`M${x - 2} 82.500l5 5m0-5l-5 5`} />)}
    </g>
    <g shapeRendering="crispEdges">
      {CANDLES.map(({ kind, y: [h, t, b, l] }, i) => {
        const x = Math.round(20 + i * 7.93);
        if (kind === "r")
          return <g key={i} stroke={C.red} fill="#000"><path d={`M${x + 0.5} ${h}V${t}M${x + 0.5} ${b}V${l}`} /><rect x={x - 1.5} y={t + 0.5} width="4" height={Math.max(1, b - t - 1)} /></g>;
        const c = kind === "c" ? C.candle : "#fff";
        return <g key={i} fill={c}><rect x={x} y={h} width="1" height={Math.max(1, l - h)} /><rect x={x - 2} y={t} width="5" height={Math.max(1, b - t)} /></g>;
      })}
    </g>
    <g fill="none" shapeRendering="crispEdges">
      {UPPER.map((s, i) => <polyline key={i} stroke={s.c} strokeWidth={s.w} strokeDasharray={s.dash} points={join(s.a, s.b, EARLY, LATE)} />)}
    </g>
    <path d="M974 404.500h18" stroke="#888" />
    <path d="M464 155v-5l13 4M464 150l4-2" fill="none" stroke={C.text} />
    <g fill={C.text}>
      <text x="478" y="161">10.75</text>
      <text x="633" y="429">6.55</text>
      <text x="969" y="419">85 -</text>
    </g>
    {STARS.map(([x, y, c], i) => <path key={i} stroke={c} strokeWidth="1.800" d={`M${x - 3} ${y - 3}l7 7m0-7l-7 7M${x - 3} ${y + 0.5}h7M${x + 0.5} ${y - 3}v6`} />)}
    {FRUITS.map(([x, y]) => (
      <g key={x}>
        <circle cx={x} cy={y + 2} r="5.500" fill="url(#fruit)" />
        <path d={`M${x - 5} ${y - 3}q3-3 5 0q4-4 7 1q-4-1-7 1q-2-2-5-2z`} fill="#0c7018" />
      </g>
    ))}
    {LABELS.map(([x, y, t, c], i) => <text key={i} x={x} y={y} fill={c}>{t}</text>)}
    <text x="194" y="355" fill={C.yellow}>☆压力越大暗条越长,做多越短越好★</text>
    <text x="18" y="484" fill={C.dim}>用到未来数据</text>
    <path d="M382 487l2.500-3 2.500 3" fill="none" stroke="#f00" strokeWidth="1.500" />
    <text x="381" y="495" fill="#f00" fontWeight="bold" fontSize="10">S</text>
  </Plot>
);

const MONTHS: [number, string][] = [[130, "5"], [297, "6"], [455, "7"], [630, "8"], [812, "9"]];

const TideChart = () => (
  <Plot viewBox="17 513 1026 289" role="img" aria-label="潮起潮落指标图">
    <g stroke="#3c3c3c" strokeDasharray="1 3" shapeRendering="crispEdges">
      {LOW_PRICES.map(([y]) => <path key={y} d={`M18 ${y + 0.5}H992`} />)}
    </g>
    <g stroke={C.line} shapeRendering="crispEdges">
      <path d="M993 513V784H1042V513" fill="none" strokeWidth="2" />
      {LOW_PRICES.map(([y]) => <path key={y} d={`M993 ${y + 0.5}h6M993 ${y + 20.5}h3`} />)}
      <path d="M17 785.500H993M993.500 785V802M1042.500 785V802" />
      {MONTHS.map(([x]) => <path key={x} d={`M${x + 0.5} 785V801`} />)}
      {[172, 214, 256, 337, 377, 417, 499, 543, 586, 676, 721, 767].map((x) => <path key={x} d={`M${x + 0.5} 785v4`} />)}
    </g>
    <g fill={C.dim}>
      {LOW_PRICES.map(([y, t]) => <text key={t} x="1041" y={y + 5} textAnchor="end">{t}</text>)}
      <text x="20" y="798">2012年</text>
      {MONTHS.map(([x, t]) => <text key={t} x={x + 2} y="798">{t}</text>)}
    </g>
    <text x="1017" y="798" fill={C.text} textAnchor="middle">日线</text>
    <g fill="none" shapeRendering="crispEdges">
      {LOWER.map((s) => <polyline key={s.c} stroke={s.c} points={join(s.a, s.b, EARLY_LOW, LATE_LOW)} />)}
    </g>
    {SQUARES.map(([x, y], i) => <rect key={i} x={Math.round(x) - 2} y={Math.round(y) - 2} width="5" height="4" fill="#fff" />)}
    <g fill="none" stroke="#e02020" shapeRendering="crispEdges">
      {FRAMES.map(([x, y, w, h]) => <rect key={x} x={x + 0.5} y={y + 0.5} width={w - 1} height={h - 1} />)}
    </g>
  </Plot>
);

/* ---------- panel data ---------- */

const IND_TABS: [string, number][] = [["指标", 29], ["模板", 31], ["全部", 32], ["G_GSDD", 44], ["G_LLZS", 44], ["G_ST", 32], ["G_SAL", 38], ["G_VC", 38], ["G_ACD", 38], ["品高国际_1", 68], ["品高国际_2", 68], ["品高国际_3", 68], ["品高国际_5", 68], ["品高国际_6", 68], ["G_QS", 32], ["大趋势", 43], ["单根差", 45], ["G_BS", 37], ["金手指", 44], ["日出东海", 56], ["TT", 21]];
const INFO_TABS = ["扩展区", "关联报价", "资金流向*", "资金驱动*", "主力轨迹", "智能解盘", "研究报告*", "券商评级*", "机构攻略", "行业攻略", "行业新闻*", "综合新闻*", "委托成交", "账户资金", "持仓股份"];

const SLICES = [["#ff5050", 29.93], ["#7e2828", 9.22], ["#4c1a1a", 10.84], ["#1a4c1a", 17.97], ["#288028", 23.76], ["#50c050", 8.28]] as [string, number][];

const Pie = () => {
  let acc = 0;
  const at = (p: number): [number, number] => {
    const a = (p / 100) * Math.PI * 2;
    return [88 + 53.5 * Math.sin(a), 53.5 - 53.5 * Math.cos(a)];
  };
  return (
    <svg width="177" height="107" viewBox="0 0 177 107" stroke="#333" role="img" aria-label="主力成交占比">
      {SLICES.map(([c, v]) => {
        const [x1, y1] = at(acc);
        acc += v;
        const [x2, y2] = at(acc);
        return <path key={c} fill={c} d={`M88 53.500L${x1} ${y1}A53.500 53.500 0 0 1 ${x2} ${y2}Z`} />;
      })}
    </svg>
  );
};

const DEALS = [
  [["买", "大", "#ff5050", "24280手", "29.93%"], ["", "中", "#7e2828", "7483手", "9.22%"], ["入", "小", "#4c1a1a", "8796手", "10.84%"]],
  [["卖", "大", "#50c050", "6712手", "8.27%"], ["", "中", "#288028", "19271手", "23.76%"], ["出", "小", "#1a4c1a", "14576手", "17.97%"]],
];

const TONE: Record<string, string> = { G: C.green, D: C.darkGreen, R: C.red, Y: C.olive, C: C.cyan };
const FEED = `14:53 天奇股份 主力卖出 8.50/3 GG|14:53 苏宁电器 主力买入 6.97/4 DR|14:53 天奇股份 低位反弹 2.184% RR|14:53 天奇股份 撑杆跳高 2.184% RR|14:53 天奇股份 单笔冲击 2.299% RR|14:53 苏宁电器 主力卖出 6.96/5 DG|14:54 攀钢钒钛 主力买入 3.79/5 DR|14:54 攀钢钒钛 主力买入 3.79/3 DR|14:54 天邦股份 主力买入 8.08/3 RR|14:54 丽珠集团 主力买入 27.35/ RR|14:54 兴业矿业 区间放量 6.199倍 CY|14:55 中福实业 主力买入 4.51/3 RR|14:55 铁岭新城 加速拉升 1.726% RR|14:55 苏宁电器 主力卖出 6.96/5 DG|14:55 苏州固锝 主力卖出 4.76/5 GG|14:55 长江证券 主力卖出 9.22/3 DG|14:55 中弘股份 区间放量 19.658倍 YY|14:55 苏宁电器 主力卖出 6.97/2 DG|14:55 苏宁电器 主力买入 6.98/1 DR|14:55 海马汽车 区间放量 9.888倍 YY|14:56 攀钢钒钛 主力卖出 3.79/6 DG|14:56 天奇股份 主力买入 8.61/3 RR|14:56 天奇股份 主力买入 8.87/4 RR|14:56 天奇股份 单笔冲击 2.989% RR|14:56 四环生物 主力买入 4.05/4 RR|14:56 深康佳A 区间放量 7.668倍 YY|14:56 银基发展 主力买入 4.12/1 RR|14:56 亿城股份 主力买入 3.19/3 RR|14:56 攀钢钒钛 主力买入 3.80/7 DR|14:56 滨江集团 主力买入 7.33/3 RR|14:56 平安银行 主力买入 13.15/ DR|14:56 量子高科 单笔冲击 2.419% RR`
  .split("|")
  .map((r) => r.split(" "));

const BIDS = [["买一", "7.46", "41443"], ["买二", "7.45", "77"], ["买三", "7.44", "10"], ["买四", "7.43", "1"], ["买五", "7.42", "112"]];
const STATS = [
  ["现价", "7.46", C.red, "今开", "6.96", C.red],
  ["涨跌", "0.68", C.red, "最高", "7.46", C.red],
  ["涨幅", "10.03%", C.red, "最低", "6.88", C.red],
  ["总量", "40560", C.olive, "量比", "4.02", C.red],
  ["外盘", "9314", C.red, "内盘", "31246", C.green],
];
const FLOWS = [["", "净流入额", "-1568", "-52%"], ["", "大宗流入", "-46.7", "-2%"], ["5", "日净流入额", "-1568", "-52%"], ["5", "日大宗流入", "-46.7", "-2%"]];
const TICKS = "14:46 10,14:47 6,14:47 4,14:47 26,14:49 50,14:51 10,14:52 5,14:53 10,14:54 6,14:55 200,14:55 3,14:55 12,14:55 320,14:56 2,15:00 360".split(",").map((t) => t.split(" "));

const INDICES = [
  ["上证", "2086.17", "29.85", "1.45%", "648.0亿", 224],
  ["深证", "8679.22", "192.95", "2.27%", "578.3亿", 224],
  ["中小", "4264.83", "101.81", "2.45%", "217.5亿", 223],
] as [string, string, string, string, string, number][];

const BlueFrame = () => <rect x=".500" y=".500" width="15" height="14" fill="#fff" stroke="#2878e0" />;
const frameText = (t: string) => (<><BlueFrame /><text x="8" y="11" textAnchor="middle" fontFamily="Liberation Sans" fontSize={t.length > 2 ? 8 : 10} fill="#1010c0">{t}</text></>);
const STRIP_A: [string, React.ReactNode][] = [
  ["自选报价", <><BlueFrame /><path d="M2 3h5M2 6h5M2 9h5M2 12h3" stroke="#080" /><path d="M9 3h5M9 6h5" stroke="#e00" /><path d="M7 11l3 3 5-6" fill="none" stroke="#888" strokeWidth="2" /></>],
  ["行情列表", <><BlueFrame /><path d="M2 3h3M2 6h3M2 9h3M2 12h3" stroke="#e00" /><path d="M6.500 3h3M6.500 6h3M6.500 9h3M6.500 12h3" stroke="#080" /><path d="M11 3h3M11 6h3M11 9h3M11 12h3" stroke="#00c" /></>],
  ["分时走势图", <><BlueFrame /><path d="M2 11l3-3 2 1 3-3 2 1 2-3" fill="none" stroke="#e01010" /></>],
  ["K线图", <><BlueFrame /><path d="M3.500 4v8M8 4v9M12.500 1v8" stroke="#333" /><path d="M2 6h3v4H2zM11 3h3v4h-3z" fill="#e00" /><path d="M6.500 6h3v5h-3z" fill="#080" /></>],
  ["多窗口", <><path d="M3.500 1.500h12v9h-12z" fill="#fff" stroke="#2878e0" /><path d="M.500 4.500h12v10H.500z" fill="#fff" stroke="#2878e0" /><path d="M1 5.500h11" stroke="#68a8f0" strokeWidth="2" /><path d="M2 8.500h9M2 10.500h9M2 12.500h9" stroke="#777" strokeDasharray="3 1" /></>],
  ["F10", frameText("F10")],
  ["板块树", <><BlueFrame /><path d="M4 5v7h6M4 7h6" fill="none" stroke="#48a" /><g fill="#ffd040" stroke="#c89010"><path d="M3 2.500h4v3H3zM10 6h4v3h-4zM10 10.500h4v3h-4z" /></g></>],
  ["自选股", <><BlueFrame /><path d="M5 4h6v8H5zM5 6.500h6M5 9h6M8 2v2" fill="none" stroke="#f07020" strokeWidth="1.500" /></>],
  ["F12", frameText("F12")],
  ["公式", <><rect x=".500" y=".500" width="15" height="14" rx="3" fill="#fff" stroke="#107080" /><text x="8" y="11" textAnchor="middle" fontFamily="Liberation Serif" fontStyle="italic" fontSize="9" fill="#1010c0">f(x)</text></>],
  ["搜索", <><BlueFrame /><circle cx="7" cy="7" r="4" fill="#e8f4ff" stroke="#2060a0" strokeWidth="1.500" /><path d="M10 10l4 4" stroke="#c88820" strokeWidth="2" /></>],
];
const STRIP_B: [string, React.ReactNode][] = [
  ["多图组合", <><BlueFrame /><path d="M1 2h14" stroke="#2878e0" strokeWidth="2" /><path d="M2 8l2-2 2 1 2-2 2 2 3-3" fill="none" stroke="#e00" /><path d="M2 12l2-1 2 1 2-2 2 2 3-3" fill="none" stroke="#00c" /></>],
  ["RSI", <text x="8" y="12" textAnchor="middle" fontFamily="Liberation Sans" fontWeight="bold" fontSize="9" fill="#1010c0">RSI</text>],
  ["资金提示", <><path d="M4 4l4-4 4 4z" fill="#e02020" /><path d="M12 5.500H7q-3 .5-3 2t4 2q4 .5 3.500 2T8 13.500H3.500" fill="none" stroke="#e02020" strokeWidth="2.200" /></>],
  ["移动", <path d="M8 0l3 3.500H9v2.500h3V4l4 4-4 4v-2H9v3h2l-3 3-3-3h2v-3H4v2L0 8l4-4v2h3V3.500H5z" fill="#1860c8" />],
  ["导出", <><BlueFrame /><path d="M13 1v13" stroke="#2878e0" /><path d="M2 6h4V3l5 4.500L6 12V9H2z" fill="#20a020" /></>],
  ["画笔", <><path d="M11 1l4 4-9 9-5 1 1-5z" fill="#f0a030" stroke="#a06010" strokeWidth=".6" /><path d="M11 1l4 4-2 2-4-4z" fill="#d05050" /><path d="M1 15l1-3 2 2z" fill="#222" /></>],
];
const STRIP_C = ["1", "5", "15", "30", "60", "N", "日", "周", "月", "多", "季", "年"];

const StripIcon = ({ item: [name, art] }: { item: [string, React.ReactNode] }) => (
  <StripButton aria-label={name}><svg width="16" height="16" viewBox="0 0 16 16">{art}</svg></StripButton>
);

const MeterBox = ({ x, red, green }: { x: number; red: number; green: number }) => (
  <g>
    <rect x={x + red} y="1" width="5" height="5" fill="#f00" />
    <rect x={x + green} y="1" width="3" height="5" fill="#080" />
    <path d={`M${x + 0.5}.500h49v6h-49zM${x + 12.5} 1v6M${x + 37.5} 1v6`} fill="none" stroke="#fff" />
    <path d={`M${x + 4} 9.500h46M${x + 4} 12.500h46`} stroke="#f00" strokeWidth="2" strokeDasharray="6 2" />
  </g>
);

export default function App() {
  return (
    <Page>
      <GlobalStyle />
      <Gradients />
      <TitleBar>
        <svg width="17" height="14" viewBox="0 0 17 14" aria-hidden="true"><path d="M2 0h14v13H2z" fill="#c8c4c0" /><path d="M2 3l4-1-1 4 3 1 6-7h2l-4 7-6 5H2z" fill="#f04818" /><path d="M2 12V8l3 3z" fill="#fff" /></svg>
        <Menu>
          {["系统", "功能", "深度", "报价", "分析", "扩展行情", "切换", "资讯", "工具", "帮助"].map((m) => <MenuItem key={m} $wide={m.length > 2}>{m}</MenuItem>)}
        </Menu>
        <Session>
          <span>交易未登录</span><span>常发股份</span><time>2012年10月2日</time><span>星期二</span><time>12:41:51</time>
        </Session>
        <Shortcuts>
          {["闪电手", "信息", "行情", "资讯", "交易", "网站"].map((s) => <Shortcut key={s}>{s}</Shortcut>)}
        </Shortcuts>
        <WindowButton $w={24} aria-label="最小化"><svg width="10" height="8"><path d="M0 4.500h10" stroke="#ddd" strokeWidth="3" /></svg></WindowButton>
        <WindowButton $w={25} aria-label="最大化"><svg width="10" height="8"><path d="M1 1h8v6H1z" fill="none" stroke="#ddd" strokeWidth="2" /></svg></WindowButton>
        <WindowButton $w={37} aria-label="关闭"><svg width="8" height="8"><path d="M0 0l8 8M8 0L0 8" stroke="#ddd" strokeWidth="2" /></svg></WindowButton>
      </TitleBar>

      <ToolBar>
        <Scroller aria-label="向左"><svg width="8" height="12" viewBox="0 0 8 12"><path d="M7 1L2 6l5 5" fill="none" stroke="#fff" strokeWidth="2" /></svg></Scroller>
        <Tools>
          {TOOL_GROUPS.map((group, g) => (
            <ToolGroup key={g}>
              {group.map(([label, icon, w = 35]) => (
                <Tool key={label} $w={w}>
                  <svg width="24" height="24" viewBox="0 0 24 24" aria-hidden="true">{ICONS[icon] || <Disc label={icon} />}</svg>
                  {label}
                </Tool>
              ))}
            </ToolGroup>
          ))}
        </Tools>
        <Scroller $right aria-label="向右"><svg width="8" height="12" viewBox="0 0 8 12"><path d="M1 1l5 5-5 5" fill="none" stroke="#fff" strokeWidth="2" /></svg></Scroller>
      </ToolBar>
      <Watermark>
        <svg width="32" height="30" viewBox="0 0 32 30" fill="none" strokeWidth="5"><path d="M10 6q8-6 13 4" stroke="#d8b038" /><path d="M18 9q-14-6-11 10" stroke="#308050" /><path d="M24 8q3 12-10 14" stroke="#c03838" /><path d="M12 10q-4 12 10 14" stroke="#489060" /></svg>
        www.55188.com
      </Watermark>

      <Workspace>
        <ChartArea>
          <ChartRow>
            <SideTabs>
              {["分时走势", "技术分析", "基本资料", "财务透视"].map((t) => <SideTab key={t} $on={t === "技术分析"}>{t}</SideTab>)}
            </SideTabs>
            <Panes>
              <PaneHeader>
                <Legend>
                  <PaneTitle $w={206}>常发股份(日线.前复权) 主升</PaneTitle>
                  <LegendItem $w={69} $c={C.yellow}>MA1: 6.86<Arrow /></LegendItem>
                  <LegendItem $w={69} $c={C.magenta}>MA2: 6.92<Arrow /></LegendItem>
                  <LegendItem $w={69} $c={C.lime}>MA3: 7.06<Arrow /></LegendItem>
                  <LegendItem $w={69} $c={C.text}>MA4: 7.15<Arrow down /></LegendItem>
                  <LegendItem $w={28} $c={C.yellow}>B: -</LegendItem>
                  <LegendItem $w={28} $c={C.lime}>S: -</LegendItem>
                  <LegendItem $w={52} $c={C.magenta}>F: 6.74<Arrow /></LegendItem>
                  <LegendItem $w={64} $c="#fff">年: 7.10<Arrow /></LegendItem>
                  <LegendItem $w={294} $c={C.teal}>底线: 6.65<Arrow /></LegendItem>
                  <svg width="26" height="16" fill="none" stroke="#444"><path d="M5.500 3l4.500 4.500-4.500 4.500L1 7.500zM14.500 2.500h9v10h-9zM19.500 2.500v10" /></svg>
                </Legend>
                <AxisCap />
              </PaneHeader>
              <PriceChart />
              <PaneHeader $boxed>
                <Legend>
                  <PaneTitle $w={80}>潮起潮落(100)</PaneTitle>
                  <LegendItem $w={47} $c="#fff">: 7.46<Arrow /></LegendItem>
                  <LegendItem $w={63} $c={C.yellow}>QS: 8.27<Arrow /></LegendItem>
                  <LegendItem $w={69} $c={C.magenta}>LQS: 6.65<Arrow /></LegendItem>
                  <LegendItem $w={60} $c={C.lime}>XG: 0.00</LegendItem>
                </Legend>
                <AxisCap $boxed />
              </PaneHeader>
              <TideChart />
            </Panes>
          </ChartRow>
          <TabStrip $h={16} $indent>
            {IND_TABS.map(([t, w], i) => (
              <Tab key={t} $w={w} data-latin={/^[A-Z_]+$/.test(t)} $bg={i === 0 ? "#666" : i === 1 ? "#000" : undefined}>{t}</Tab>
            ))}
            <StripEnd><Tab $w={16}>+</Tab><Tab $w={16}>-</Tab><Tab $w={17}>0</Tab></StripEnd>
          </TabStrip>
          <TabStrip $h={18}>
            {INFO_TABS.map((t, i) => <Tab key={t} $w={i ? 56 : 44} $c={t.endsWith("*") ? C.olive : undefined}>{t.replace("*", "")}</Tab>)}
            <StripEnd><Tab $w={49} $c={C.olive}>资讯工场</Tab></StripEnd>
          </TabStrip>
        </ChartArea>

        <MainForce>
          <PanelTabs>
            <PanelTab $w={19}>柱</PanelTab><PanelTab $w={19}>单</PanelTab><PanelTab $w={38}>仅主动</PanelTab><PanelTab $w={122}>龙虎看盘(成交量/按单)</PanelTab>
          </PanelTabs>
          <PieBox><Pie /></PieBox>
          <Breakdown>
            <colgroup><col width="19" /><col width="20" /><col width="18" /><col width="59" /><col /></colgroup>
            {DEALS.map((side, i) => (
              <tbody key={i}>
                {side.map(([s, size, c, lots, pct]) => (
                  <tr key={size}><td>{s}</td><td>{size}</td><td><Swatch $c={c} /></td><td>{lots}</td><td>{pct}</td></tr>
                ))}
              </tbody>
            ))}
          </Breakdown>
          <PanelTabs>
            {["全部", "自定", "自选", "当前", "设置", "浮出", "扩展"].map((t, i) => <PanelTab key={t} $w={28} $on={i === 0}>{t}</PanelTab>)}
          </PanelTabs>
          <Feed>
            <colgroup><col width="34" /><col width="55" /><col width="54" /><col /></colgroup>
            <tbody>
              {FEED.map(([time, name, act, val, tone], i) => (
                <tr key={i}>
                  <Cell $c={TONE[tone[0]]}>{time}</Cell><Cell $c={TONE[tone[0]]}>{name}</Cell>
                  <Cell $c={TONE[tone[1]]}>{act}</Cell><Cell $c={TONE[tone[1]]}>{val}</Cell>
                </tr>
              ))}
            </tbody>
          </Feed>
          <PanelTabs $last>
            {["主力", "关联", "分价", "筹码"].map((t, i) => <PanelTab key={t} $w={i ? 45 : 42} $on={i === 0} $bg={i ? "#000" : "#222"}>{t}</PanelTab>)}
          </PanelTabs>
        </MainForce>

        <Quote>
          <StockName><b>002413</b> 常发股份</StockName>
          <Block>
            <colgroup><col width="36" /><col width="60" /><col width="37" /><col /></colgroup>
            <tbody><tr><th>委比</th><Cell $c={C.red}>100.00%</Cell><th>委差</th><Cell $c={C.red}>41643</Cell></tr></tbody>
          </Block>
          <Block $pad>
            <tbody>{["卖五", "卖四", "卖三", "卖二", "卖一"].map((t) => <tr key={t}><th>{t}</th></tr>)}</tbody>
          </Block>
          <Block $pad>
            <colgroup><col width="36" /><col width="60" /><col /></colgroup>
            <tbody>{BIDS.map(([t, p, v]) => <tr key={t}><th>{t}</th><Cell $c={C.red}>{p}</Cell><Cell $c={C.olive}>{v}</Cell></tr>)}</tbody>
          </Block>
          <Block $pad>
            <colgroup><col width="36" /><col width="60" /><col width="37" /><col /></colgroup>
            <tbody>
              {STATS.map(([a, av, ac, b, bv, bc]) => <tr key={a}><th>{a}</th><Cell $c={ac}>{av}</Cell><th>{b}</th><Cell $c={bc}>{bv}</Cell></tr>)}
            </tbody>
          </Block>
          <Block $pad>
            <colgroup><col width="52" /><col width="44" /><col width="47" /><col /></colgroup>
            <tbody>
              <tr><th>换手</th><td>5.15%</td><th>股本</th><td>2.21<span>亿</span></td></tr>
              <tr><th>净资</th><td>5.33</td><th>流通</th><td>7870<span>万</span></td></tr>
              <tr><th>收益㈡</th><td>0.147</td><th><small>PE(</small>动<small>)</small></th><td>25.3</td></tr>
            </tbody>
          </Block>
          <Block>
            <colgroup><col width="94" /><col width="60" /><col /></colgroup>
            <tbody>
              {FLOWS.map(([n, t, v, p]) => <tr key={n + t}><th>{n && <small>{n}</small>}{t}</th><Cell $c={C.green}>{v}<span>万</span></Cell><Cell $c={C.green}>{p}</Cell></tr>)}
            </tbody>
          </Block>
          <Ticks>
            <colgroup><col width="44" /><col width="47" /><col width="52" /><col width="24" /><col /></colgroup>
            <tbody>
              {TICKS.map(([t, v], i) => {
                const last = i === TICKS.length - 1;
                return (
                  <tr key={i}>
                    <td>{t}</td><Cell $c={C.red}>7.46</Cell><Cell $c={C.olive}>{v}</Cell><Cell $c={C.green}>{last ? "" : "S"}</Cell><Cell $c="#888">{last ? "6" : "1"}</Cell>
                  </tr>
                );
              })}
            </tbody>
          </Ticks>
          <PanelTabs $last>
            {["笔", "价", "细", "盘", "势", "指", "值", "筹"].map((t, i) => <PanelTab key={t} $w={24} $on={i === 0} $bg={i ? "#000" : "#222"}>{t}</PanelTab>)}
          </PanelTabs>
        </Quote>

        <IconStrip>
          {STRIP_A.map((it) => <StripIcon key={it[0]} item={it} />)}
          <StripRule />
          {STRIP_B.map((it) => <StripIcon key={it[0]} item={it} />)}
          <StripRule />
          <StripIcon item={["F5", frameText("F5")]} />
          {STRIP_C.map((t) => <StripButton key={t} $on={t === "日"}>{t}</StripButton>)}
          <StripRule />
        </IconStrip>
      </Workspace>

      <StatusBar>
        <svg width="15" height="14" viewBox="0 0 15 14" aria-hidden="true"><path d="M1 0h14v13H1z" fill="url(#orangeV)" /><path d="M3.500 3.500h9v7h-9z" fill="#f0a830" stroke="#fff" strokeWidth="1.500" /></svg>
        <Brand>通达信</Brand>
        {INDICES.map(([n, p, d, r, v, w]) => (
          <Index key={n} $w={w}><span>{n}</span><b>{p}</b><b>{d}</b><b>{r}</b><span>{v}</span></Index>
        ))}
        <Meter><svg width="103" height="15" viewBox="0 0 103 15" aria-hidden="true"><MeterBox x={0} red={20} green={25} /><MeterBox x={52} red={19} green={25} /></svg></Meter>
        <span>决策家 (济南网通)</span>
        <Tray>
          <svg width="15" height="12"><path d="M.500.500h14v11H.500z" fill="#e8f4ff" stroke="#99b" /><path d="M1 1l6.500 6L14 1M1 11l4-5M14 11l-4-5" fill="none" stroke="#557" /></svg>
          <svg width="12" height="13"><rect width="12" height="13" rx="3" fill="#e8d820" /><path d="M6 2l4 4H7v4H5V6H2z" fill="#776800" /></svg>
          <svg width="13" height="15" fill="none" stroke="#998844"><path d="M2 1q-2 3 0 6M11 1q2 3 0 6M4 2q-1 2 0 4M9 2q1 2 0 4" /><path d="M6.500 5L4 14h5z" stroke="#aaa" /></svg>
          <svg width="18" height="13"><path d="M9 0l4 4H5zM9 4l4 4H5zM9 7l4 4H5zM8 11h2v2H8z" fill="#888" /></svg>
          <svg width="6" height="13"><path d="M1 0h3v7H2zM2 9h2v3H2z" fill="#888" /></svg>
        </Tray>
      </StatusBar>
    </Page>
  );
}
